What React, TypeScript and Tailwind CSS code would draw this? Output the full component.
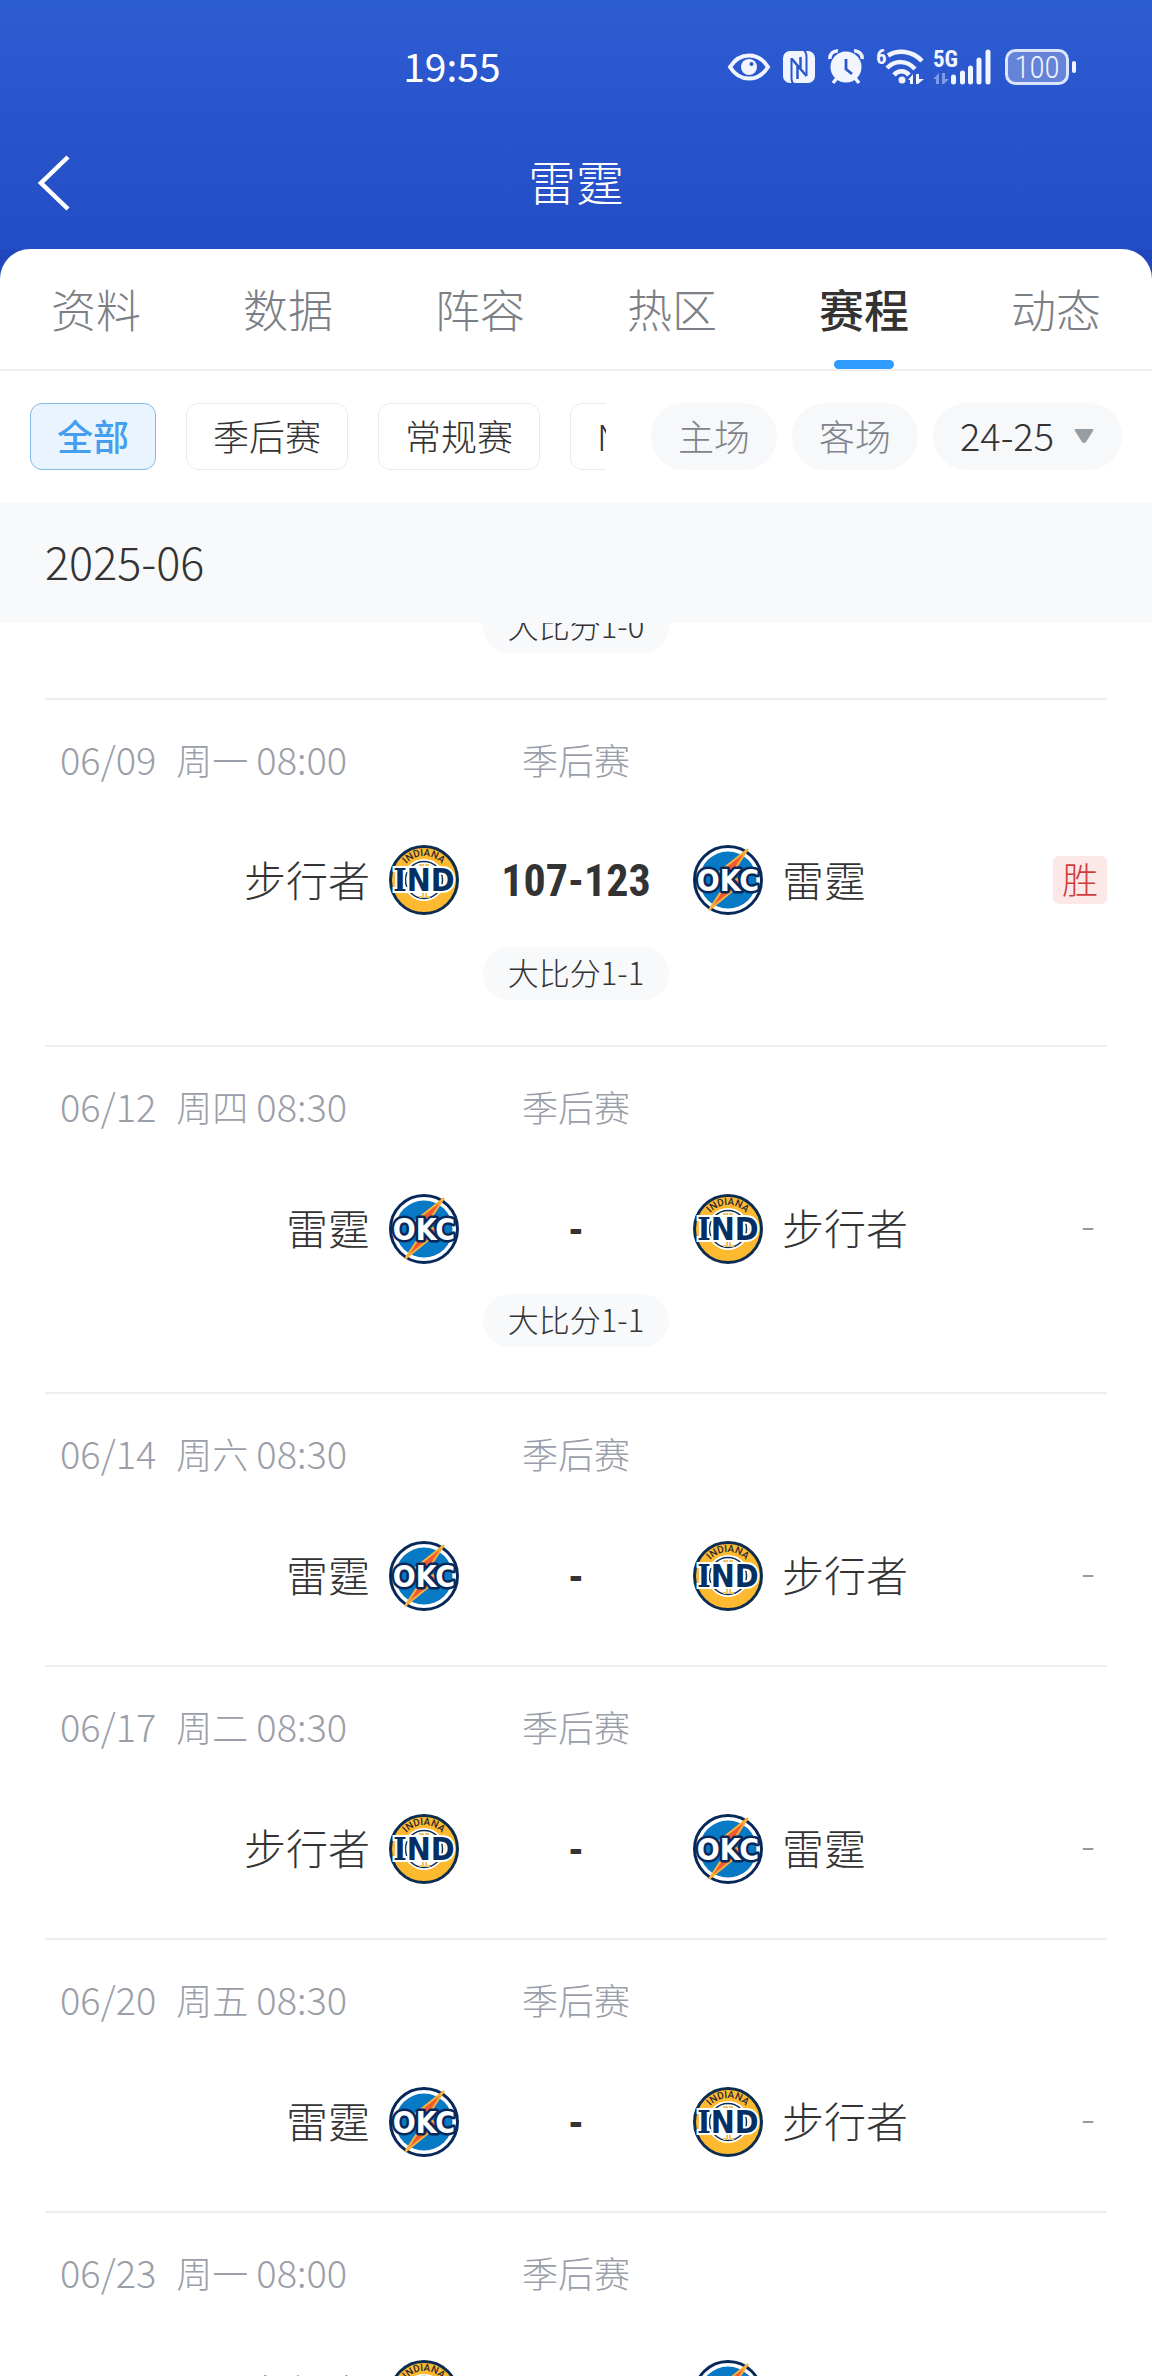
import { useState } from "react"

const tabs = ["资料", "数据", "阵容", "热区", "赛程", "动态"]
const filters = ["全部", "季后赛", "常规赛", "NBA"]

type Team = "IND" | "OKC"
type Game = { date: string; week: string; time: string; left: Team; right: Team; score?: string; series?: string; win?: boolean }

const names = { IND: "步行者", OKC: "雷霆" }

const games: Game[] = [
	{ date: "06/09", week: "周一", time: "08:00", left: "IND", right: "OKC", score: "107-123", series: "大比分1-1", win: true },
	{ date: "06/12", week: "周四", time: "08:30", left: "OKC", right: "IND", series: "大比分1-1" },
	{ date: "06/14", week: "周六", time: "08:30", left: "OKC", right: "IND" },
	{ date: "06/17", week: "周二", time: "08:30", left: "IND", right: "OKC" },
	{ date: "06/20", week: "周五", time: "08:30", left: "OKC", right: "IND" },
	{ date: "06/23", week: "周一", time: "08:00", left: "IND", right: "OKC" },
]

function PacersLogo() {
	return (
		<svg viewBox="0 0 72 72" className="size-[72px] shrink-0 overflow-visible">
			<defs>
				<path id="arc" d="M12 36a24 24 0 0 1 48 0" />
			</defs>
			<circle cx="36" cy="36" r="33.500" fill="#fdb92f" stroke="#0c2c50" strokeWidth="3" />
			<circle cx="36" cy="36" r="21" fill="#fff" />
			<circle cx="36" cy="36" r="18.500" fill="#fff" stroke="#0c2c50" strokeWidth="1.500" />
			<path d="M31 21h4v5M41 21h-3v32h4M31 53h4v-6" fill="none" stroke="#f5c25c" strokeWidth="2" />
			<text fontSize="10" fontWeight="500" fill="#2b2a33" textAnchor="middle" className="font-['Roboto']">
				<textPath href="#arc" startOffset="50%">INDIANA</textPath>
			</text>
			<text x="36" y="47" fontSize="32" fontWeight="700" textAnchor="middle" fill="#052f64" stroke="#fff" strokeWidth="4" paintOrder="stroke" className="font-['DejaVu_Sans_Condensed']">
				<tspan className="font-['DejaVu_Serif_Condensed']">I</tspan>ND
			</text>
		</svg>
	)
}

function ThunderLogo() {
	return (
		<svg viewBox="0 0 72 72" className="size-[72px] shrink-0 overflow-visible">
			<circle cx="36" cy="36" r="33.500" fill="#fff" stroke="#06285a" strokeWidth="3" />
			<circle cx="36" cy="36" r="28.500" fill="#0879c4" />
			<path d="M56 5 22 32l12 8L17 66l33-27-11-8Z" fill="#f05a30" stroke="#f9b13c" strokeWidth="2" />
			<text x="36" y="47" fontSize="30" fontWeight="700" textAnchor="middle" fill="#fff" stroke="#06285a" strokeWidth="5" paintOrder="stroke" strokeLinejoin="round" className="font-['DejaVu_Sans_Condensed']">OKC</text>
		</svg>
	)
}

function Logo({ team }: { team: Team }) {
	return team === "IND" ? <PacersLogo /> : <ThunderLogo />
}

function StatusIcons() {
	return (
		<div className="ml-auto mr-[75px] flex items-center text-[#f1f5ff]">
			<svg viewBox="0 0 44 36" className="mr-[11px] h-9 w-11">
				<path d="M3 18C8 10 15 6.500 22 6.500S36 10 41 18C36 26 29 29.500 22 29.500S8 26 3 18Z" fill="none" stroke="currentColor" strokeWidth="4" />
				<circle cx="22" cy="18" r="8" fill="currentColor" />
				<circle cx="24.500" cy="15" r="2" fill="#2a57cc" />
			</svg>
			<svg viewBox="0 0 34 36" className="mr-3 h-9 w-[34px]">
				<rect x="1" y="2" width="32" height="32" rx="7" fill="currentColor" />
				<path d="M9.500 9v20q0 5 3 6M24.500 27V8q0-5-3-7" fill="none" stroke="#2a57cc" strokeWidth="2" />
				<path d="M9.500 9.500 24.500 27M15.500 30V16M18.500 20V8" fill="none" stroke="#2a57cc" strokeWidth="2.500" />
			</svg>
			<svg viewBox="0 0 36 36" className="mr-3 h-9 w-9">
				<path d="M2 10a7 7 0 0 1 8-8M34 10a7 7 0 0 0-8-8M9 29l-4 5M27 29l4 5" stroke="currentColor" strokeWidth="3.500" fill="none" />
				<circle cx="18" cy="18" r="15.500" fill="currentColor" />
				<path d="M18 10v10l6 5" fill="none" stroke="#2a57cc" strokeWidth="2.800" />
			</svg>
			<svg viewBox="0 0 48 36" className="mr-[9px] h-9 w-12 overflow-visible">
				<text x="0" y="15" fontSize="21" fontWeight="700" fill="currentColor" className="font-['Roboto_Condensed']">6</text>
				<g fill="none" stroke="currentColor" strokeWidth="4.500">
					<path d="M12 6.500C22 .5 36 1.500 46 12" />
					<path d="M11 19c8-8 20-8 28 1" />
					<path d="M18 26c4-5 11-5 15 0" />
				</g>
				<circle cx="26" cy="31" r="3.500" fill="currentColor" />
				<path d="M32 31l5-6v10h-3v-4ZM40 25h3v5h5l-6 5h-2Z" fill="currentColor" />
			</svg>
			<svg viewBox="0 0 58 36" className="mr-[14px] h-9 w-[58px] overflow-visible">
				<text x="0" y="18" fontSize="23" fontWeight="700" fill="currentColor" className="font-['Roboto_Condensed']">5G</text>
				<path d="M0 30l6-6v11H3v-5ZM9 24h3v6h4l-5 5H9Z" fill="#7d9be6" />
				<path d="M20.500 28v5M29.500 24v9M37.500 19v14M46 11v22M55 3v30" stroke="currentColor" strokeWidth="5" strokeLinecap="round" />
			</svg>
			<svg viewBox="0 0 72 36" className="h-9 w-[72px]">
				<rect x="1.500" y="1.500" width="61" height="33" rx="9" fill="#6483d9" stroke="#dbe5fd" strokeWidth="3" />
				<rect x="67" y="12" width="4" height="12" rx="2" fill="currentColor" />
				<text x="32" y="29" fontSize="31" fontWeight="300" textAnchor="middle" fill="currentColor" className="font-['Roboto_Condensed']">100</text>
			</svg>
		</div>
	)
}

function SeriesPill({ children }: { children: string }) {
	return (
		<div className="mx-auto mb-[45px] flex h-[53px] w-fit shrink-0 items-center rounded-full bg-[#f8f9fb] px-[25px] pb-0.5 text-[31px] font-light text-[#333]">
			{children}
		</div>
	)
}

function GameRow({ game }: { game: Game }) {
	return (
		<li className="border-t-2 border-[#eee] pt-[37px]">
			<div className="grid h-11 grid-cols-[1fr_232px_1fr] items-center text-4xl/11 font-light text-[#9a9ea9]">
				<div className="flex items-baseline gap-2 whitespace-nowrap pl-[15px]">
					<span className="mr-3 text-[38px]/11">{game.date}</span>
					<span>{game.week}</span>
					<span className="text-[38px]/11">{game.time}</span>
				</div>
				<span className="text-center">季后赛</span>
			</div>
			<div className={`mt-[63px] grid h-[72px] grid-cols-[1fr_232px_1fr] items-center text-[42px] font-light text-[#333] ${game.series ? "mb-[31px]" : "mb-[55px]"}`}>
				<div className="flex items-center justify-end gap-[18px]">
					<span className="pb-1">{names[game.left]}</span>
					<Logo team={game.left} />
				</div>
				<span className="pt-0.5 text-center font-['Roboto_Condensed',Roboto,sans-serif] text-[44px] font-bold">{game.score ?? "-"}</span>
				<div className="flex items-center gap-[18px]">
					<Logo team={game.right} />
					<span className="pb-1">{names[game.right]}</span>
					{game.win ? (
						<span className="ml-auto flex h-12 w-[54px] items-center justify-center rounded-md bg-[#fde8e8] pb-1 text-4xl font-light text-[#d03c3c]">胜</span>
					) : (
						<span className="ml-auto pb-3 pr-3 text-[#999]">-</span>
					)}
				</div>
			</div>
			{game.series && <SeriesPill>{game.series}</SeriesPill>}
		</li>
	)
}

export default function App() {
	const [tab, setTab] = useState("赛程")
	const [filter, setFilter] = useState("全部")
	const [season, setSeason] = useState("24-25")

	return (
		<div className="flex h-screen flex-col overflow-hidden bg-[#2147bd] font-['Noto_Sans_CJK_SC',sans-serif]">
			<header className="h-[249px] shrink-0 bg-linear-to-b from-[#2e5cd1] to-[#234dc6] text-white">
				<div className="flex h-[134px] items-center">
					<span className="ml-[35%] pb-1 text-[39px]">19:55</span>
					<StatusIcons />
				</div>
				<div className="grid h-[98px] grid-cols-[1fr_auto_1fr] items-center">
					<button aria-label="返回" className="ml-[38px] w-fit">
						<svg viewBox="0 0 32 56" className="h-14 w-8" fill="none" stroke="currentColor" strokeWidth="4.500">
							<path d="M30 2 3 28l27 26" />
						</svg>
					</button>
					<h1 className="pb-1.5 text-5xl font-light">雷霆</h1>
				</div>
			</header>

			<main className="flex min-h-0 flex-1 flex-col overflow-hidden rounded-t-[30px] bg-white">
				<nav className="grid h-[122px] shrink-0 grid-cols-6 border-b-2 border-[#eee]">
					{tabs.map((t) => (
						<button key={t} onClick={() => setTab(t)} className={`relative text-[45px] ${tab === t ? "font-medium text-[#333]" : "font-light text-[#7c7f86]"}`}>
							{t}
							{tab === t && <span className="absolute bottom-0 left-1/2 h-[9px] w-[60px] -translate-x-1/2 rounded-full bg-[#309cff]"></span>}
						</button>
					))}
				</nav>

				<div className="flex h-[132px] shrink-0 items-center px-[30px] pb-0.5 text-4xl">
					<div className="mr-[45px] flex min-w-0 flex-1 gap-[30px] overflow-hidden">
						{filters.map((f) => (
							<button key={f} onClick={() => setFilter(f)} className={`h-[67px] shrink-0 rounded-xl border px-[26px] pb-0.5 ${filter === f ? "border-[#83bbe6] bg-[#e9f4fe] font-medium text-[#459fee]" : "border-[#ebebeb] font-light text-[#333]"}`}>
								{f}
							</button>
						))}
					</div>
					<div className="flex shrink-0 gap-[15px] font-light text-[#7f848c]">
						<button className="h-[67px] rounded-full bg-[#f7f8fa] px-[27px] pb-0.5">主场</button>
						<button className="h-[67px] rounded-full bg-[#f7f8fa] px-[27px] pb-0.5">客场</button>
						<div className="relative">
							<select aria-label="赛季" value={season} onChange={(e) => setSeason(e.target.value)} className="h-[67px] w-[189px] appearance-none rounded-full bg-[#f7f8fa] pb-0.5 pl-[27px] text-[38px] text-[#333]">
								<option>24-25</option>
								<option>23-24</option>
							</select>
							<svg viewBox="0 0 20 16" className="pointer-events-none absolute right-7 top-[25px] h-4 w-5">
								<path d="M2 1h16q2 0 1 2l-7 11q-2 2-4 0L1 3Q0 1 2 1Z" fill="#969da3" />
							</svg>
						</div>
					</div>
				</div>

				<h2 className="flex h-[120px] shrink-0 items-center bg-[#f8f9fb] px-[45px] pb-1 text-[45px] font-light text-[#333]">2025-06</h2>

				<div className="flex min-h-0 flex-1 flex-col overflow-hidden px-[45px]">
					<div className="-mt-[23px] flex shrink-0">
						<SeriesPill>大比分1-0</SeriesPill>
					</div>
					<ul>
						{games.map((g) => <GameRow key={g.date} game={g} />)}
					</ul>
				</div>
			</main>
		</div>
	)
}
